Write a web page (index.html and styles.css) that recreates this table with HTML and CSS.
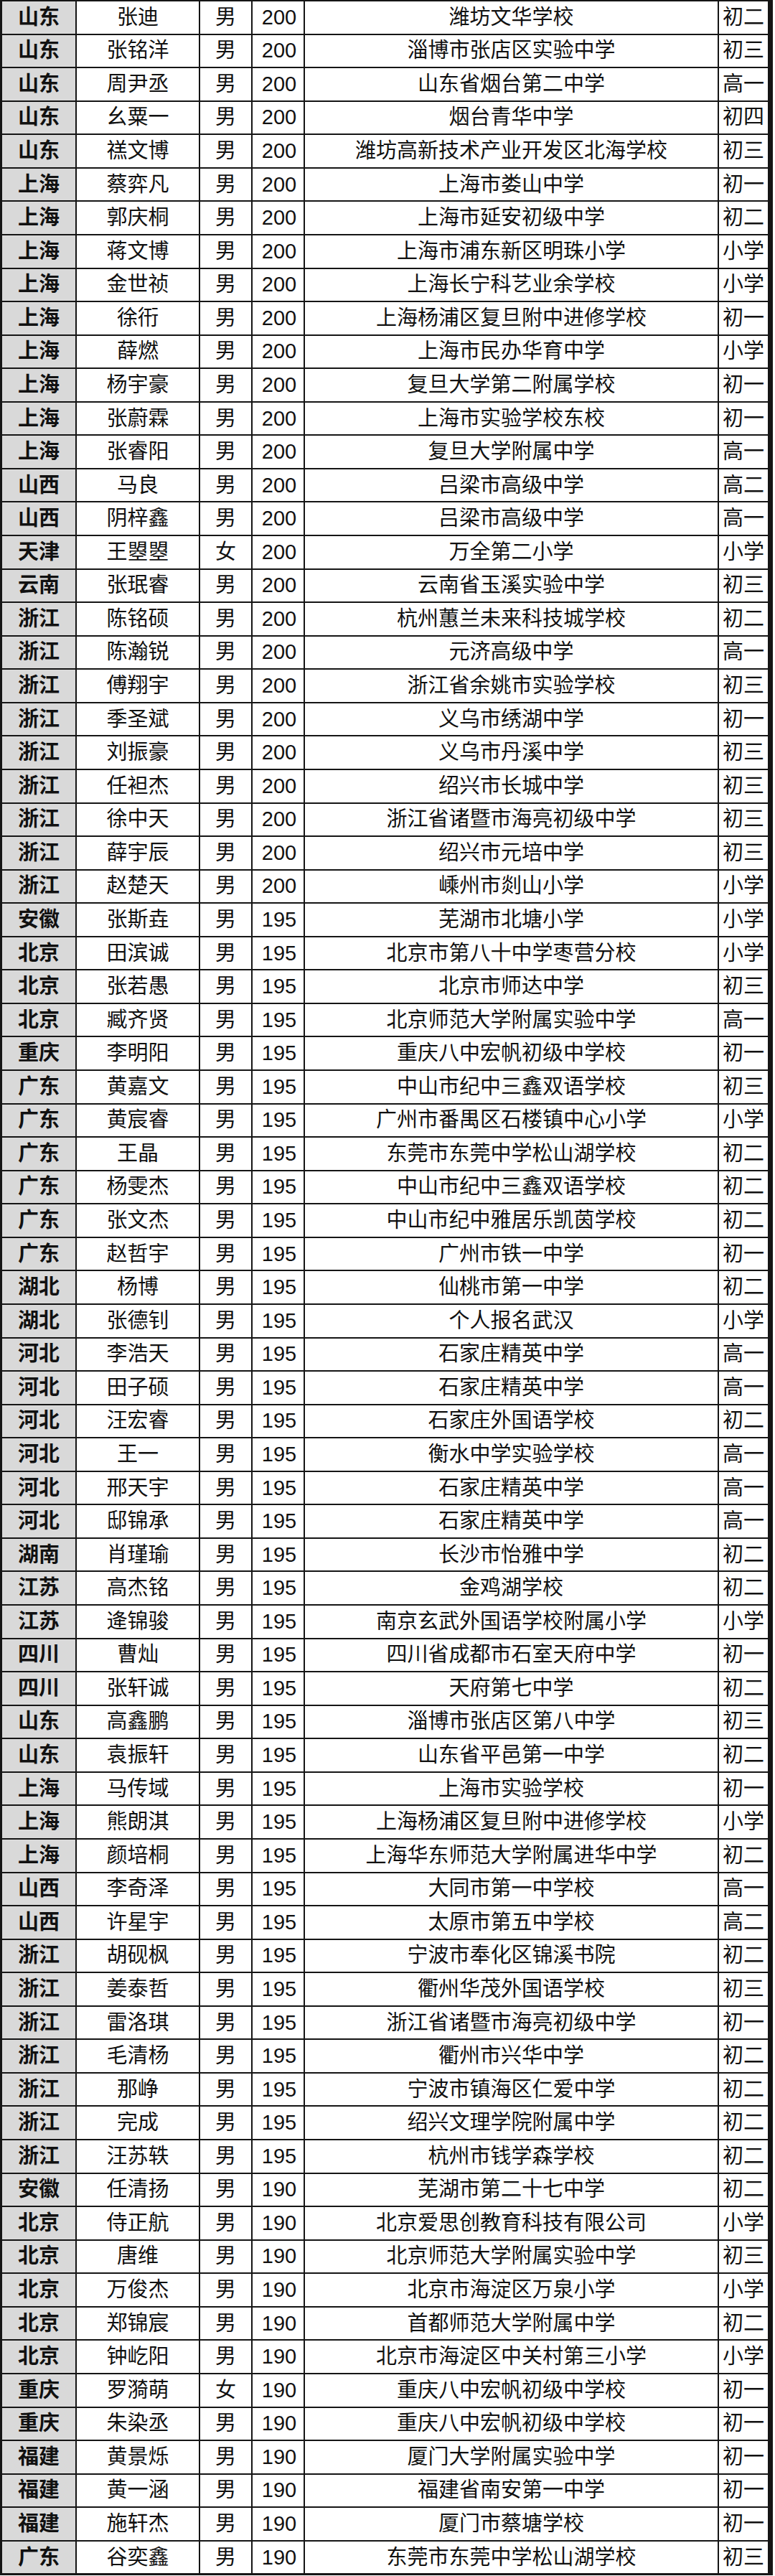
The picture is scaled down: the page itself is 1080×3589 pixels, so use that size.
FILE: index.html
```html
<!DOCTYPE html>
<html lang="zh-CN">
<head>
<meta charset="utf-8">
<title>成绩表</title>
<link rel="stylesheet" href="styles.css">
</head>
<body>
<div class="sheet">
<div class="row"><div class="c prov">山东</div><div class="c">张迪</div><div class="c">男</div><div class="c num">200</div><div class="c">潍坊文华学校</div><div class="c">初二</div></div>
<div class="row"><div class="c prov">山东</div><div class="c">张铭洋</div><div class="c">男</div><div class="c num">200</div><div class="c">淄博市张店区实验中学</div><div class="c">初三</div></div>
<div class="row"><div class="c prov">山东</div><div class="c">周尹丞</div><div class="c">男</div><div class="c num">200</div><div class="c">山东省烟台第二中学</div><div class="c">高一</div></div>
<div class="row"><div class="c prov">山东</div><div class="c">幺粟一</div><div class="c">男</div><div class="c num">200</div><div class="c">烟台青华中学</div><div class="c">初四</div></div>
<div class="row"><div class="c prov">山东</div><div class="c">禚文博</div><div class="c">男</div><div class="c num">200</div><div class="c">潍坊高新技术产业开发区北海学校</div><div class="c">初三</div></div>
<div class="row"><div class="c prov">上海</div><div class="c">蔡弈凡</div><div class="c">男</div><div class="c num">200</div><div class="c">上海市娄山中学</div><div class="c">初一</div></div>
<div class="row"><div class="c prov">上海</div><div class="c">郭庆桐</div><div class="c">男</div><div class="c num">200</div><div class="c">上海市延安初级中学</div><div class="c">初二</div></div>
<div class="row"><div class="c prov">上海</div><div class="c">蒋文博</div><div class="c">男</div><div class="c num">200</div><div class="c">上海市浦东新区明珠小学</div><div class="c">小学</div></div>
<div class="row"><div class="c prov">上海</div><div class="c">金世祯</div><div class="c">男</div><div class="c num">200</div><div class="c">上海长宁科艺业余学校</div><div class="c">小学</div></div>
<div class="row"><div class="c prov">上海</div><div class="c">徐衎</div><div class="c">男</div><div class="c num">200</div><div class="c">上海杨浦区复旦附中进修学校</div><div class="c">初一</div></div>
<div class="row"><div class="c prov">上海</div><div class="c">薛燃</div><div class="c">男</div><div class="c num">200</div><div class="c">上海市民办华育中学</div><div class="c">小学</div></div>
<div class="row"><div class="c prov">上海</div><div class="c">杨宇豪</div><div class="c">男</div><div class="c num">200</div><div class="c">复旦大学第二附属学校</div><div class="c">初一</div></div>
<div class="row"><div class="c prov">上海</div><div class="c">张蔚霖</div><div class="c">男</div><div class="c num">200</div><div class="c">上海市实验学校东校</div><div class="c">初一</div></div>
<div class="row"><div class="c prov">上海</div><div class="c">张睿阳</div><div class="c">男</div><div class="c num">200</div><div class="c">复旦大学附属中学</div><div class="c">高一</div></div>
<div class="row"><div class="c prov">山西</div><div class="c">马良</div><div class="c">男</div><div class="c num">200</div><div class="c">吕梁市高级中学</div><div class="c">高二</div></div>
<div class="row"><div class="c prov">山西</div><div class="c">阴梓鑫</div><div class="c">男</div><div class="c num">200</div><div class="c">吕梁市高级中学</div><div class="c">高一</div></div>
<div class="row"><div class="c prov">天津</div><div class="c">王曌曌</div><div class="c">女</div><div class="c num">200</div><div class="c">万全第二小学</div><div class="c">小学</div></div>
<div class="row"><div class="c prov">云南</div><div class="c">张珉睿</div><div class="c">男</div><div class="c num">200</div><div class="c">云南省玉溪实验中学</div><div class="c">初三</div></div>
<div class="row"><div class="c prov">浙江</div><div class="c">陈铭硕</div><div class="c">男</div><div class="c num">200</div><div class="c">杭州蕙兰未来科技城学校</div><div class="c">初二</div></div>
<div class="row"><div class="c prov">浙江</div><div class="c">陈瀚锐</div><div class="c">男</div><div class="c num">200</div><div class="c">元济高级中学</div><div class="c">高一</div></div>
<div class="row"><div class="c prov">浙江</div><div class="c">傅翔宇</div><div class="c">男</div><div class="c num">200</div><div class="c">浙江省余姚市实验学校</div><div class="c">初三</div></div>
<div class="row"><div class="c prov">浙江</div><div class="c">季圣斌</div><div class="c">男</div><div class="c num">200</div><div class="c">义乌市绣湖中学</div><div class="c">初一</div></div>
<div class="row"><div class="c prov">浙江</div><div class="c">刘振豪</div><div class="c">男</div><div class="c num">200</div><div class="c">义乌市丹溪中学</div><div class="c">初三</div></div>
<div class="row"><div class="c prov">浙江</div><div class="c">任袒杰</div><div class="c">男</div><div class="c num">200</div><div class="c">绍兴市长城中学</div><div class="c">初三</div></div>
<div class="row"><div class="c prov">浙江</div><div class="c">徐中天</div><div class="c">男</div><div class="c num">200</div><div class="c">浙江省诸暨市海亮初级中学</div><div class="c">初三</div></div>
<div class="row"><div class="c prov">浙江</div><div class="c">薛宇辰</div><div class="c">男</div><div class="c num">200</div><div class="c">绍兴市元培中学</div><div class="c">初三</div></div>
<div class="row"><div class="c prov">浙江</div><div class="c">赵楚天</div><div class="c">男</div><div class="c num">200</div><div class="c">嵊州市剡山小学</div><div class="c">小学</div></div>
<div class="row"><div class="c prov">安徽</div><div class="c">张斯垚</div><div class="c">男</div><div class="c num">195</div><div class="c">芜湖市北塘小学</div><div class="c">小学</div></div>
<div class="row"><div class="c prov">北京</div><div class="c">田滨诚</div><div class="c">男</div><div class="c num">195</div><div class="c">北京市第八十中学枣营分校</div><div class="c">小学</div></div>
<div class="row"><div class="c prov">北京</div><div class="c">张若愚</div><div class="c">男</div><div class="c num">195</div><div class="c">北京市师达中学</div><div class="c">初三</div></div>
<div class="row"><div class="c prov">北京</div><div class="c">臧齐贤</div><div class="c">男</div><div class="c num">195</div><div class="c">北京师范大学附属实验中学</div><div class="c">高一</div></div>
<div class="row"><div class="c prov">重庆</div><div class="c">李明阳</div><div class="c">男</div><div class="c num">195</div><div class="c">重庆八中宏帆初级中学校</div><div class="c">初一</div></div>
<div class="row"><div class="c prov">广东</div><div class="c">黄嘉文</div><div class="c">男</div><div class="c num">195</div><div class="c">中山市纪中三鑫双语学校</div><div class="c">初三</div></div>
<div class="row"><div class="c prov">广东</div><div class="c">黄宸睿</div><div class="c">男</div><div class="c num">195</div><div class="c">广州市番禺区石楼镇中心小学</div><div class="c">小学</div></div>
<div class="row"><div class="c prov">广东</div><div class="c">王晶</div><div class="c">男</div><div class="c num">195</div><div class="c">东莞市东莞中学松山湖学校</div><div class="c">初二</div></div>
<div class="row"><div class="c prov">广东</div><div class="c">杨雯杰</div><div class="c">男</div><div class="c num">195</div><div class="c">中山市纪中三鑫双语学校</div><div class="c">初二</div></div>
<div class="row"><div class="c prov">广东</div><div class="c">张文杰</div><div class="c">男</div><div class="c num">195</div><div class="c">中山市纪中雅居乐凯茵学校</div><div class="c">初二</div></div>
<div class="row"><div class="c prov">广东</div><div class="c">赵哲宇</div><div class="c">男</div><div class="c num">195</div><div class="c">广州市铁一中学</div><div class="c">初一</div></div>
<div class="row"><div class="c prov">湖北</div><div class="c">杨博</div><div class="c">男</div><div class="c num">195</div><div class="c">仙桃市第一中学</div><div class="c">初二</div></div>
<div class="row"><div class="c prov">湖北</div><div class="c">张德钊</div><div class="c">男</div><div class="c num">195</div><div class="c">个人报名武汉</div><div class="c">小学</div></div>
<div class="row"><div class="c prov">河北</div><div class="c">李浩天</div><div class="c">男</div><div class="c num">195</div><div class="c">石家庄精英中学</div><div class="c">高一</div></div>
<div class="row"><div class="c prov">河北</div><div class="c">田子硕</div><div class="c">男</div><div class="c num">195</div><div class="c">石家庄精英中学</div><div class="c">高一</div></div>
<div class="row"><div class="c prov">河北</div><div class="c">汪宏睿</div><div class="c">男</div><div class="c num">195</div><div class="c">石家庄外国语学校</div><div class="c">初二</div></div>
<div class="row"><div class="c prov">河北</div><div class="c">王一</div><div class="c">男</div><div class="c num">195</div><div class="c">衡水中学实验学校</div><div class="c">高一</div></div>
<div class="row"><div class="c prov">河北</div><div class="c">邢天宇</div><div class="c">男</div><div class="c num">195</div><div class="c">石家庄精英中学</div><div class="c">高一</div></div>
<div class="row"><div class="c prov">河北</div><div class="c">邸锦承</div><div class="c">男</div><div class="c num">195</div><div class="c">石家庄精英中学</div><div class="c">高一</div></div>
<div class="row"><div class="c prov">湖南</div><div class="c">肖瑾瑜</div><div class="c">男</div><div class="c num">195</div><div class="c">长沙市怡雅中学</div><div class="c">初二</div></div>
<div class="row"><div class="c prov">江苏</div><div class="c">高杰铭</div><div class="c">男</div><div class="c num">195</div><div class="c">金鸡湖学校</div><div class="c">初二</div></div>
<div class="row"><div class="c prov">江苏</div><div class="c">逄锦骏</div><div class="c">男</div><div class="c num">195</div><div class="c">南京玄武外国语学校附属小学</div><div class="c">小学</div></div>
<div class="row"><div class="c prov">四川</div><div class="c">曹灿</div><div class="c">男</div><div class="c num">195</div><div class="c">四川省成都市石室天府中学</div><div class="c">初一</div></div>
<div class="row"><div class="c prov">四川</div><div class="c">张轩诚</div><div class="c">男</div><div class="c num">195</div><div class="c">天府第七中学</div><div class="c">初二</div></div>
<div class="row"><div class="c prov">山东</div><div class="c">高鑫鹏</div><div class="c">男</div><div class="c num">195</div><div class="c">淄博市张店区第八中学</div><div class="c">初三</div></div>
<div class="row"><div class="c prov">山东</div><div class="c">袁振轩</div><div class="c">男</div><div class="c num">195</div><div class="c">山东省平邑第一中学</div><div class="c">初二</div></div>
<div class="row"><div class="c prov">上海</div><div class="c">马传域</div><div class="c">男</div><div class="c num">195</div><div class="c">上海市实验学校</div><div class="c">初一</div></div>
<div class="row"><div class="c prov">上海</div><div class="c">熊朗淇</div><div class="c">男</div><div class="c num">195</div><div class="c">上海杨浦区复旦附中进修学校</div><div class="c">小学</div></div>
<div class="row"><div class="c prov">上海</div><div class="c">颜培桐</div><div class="c">男</div><div class="c num">195</div><div class="c">上海华东师范大学附属进华中学</div><div class="c">初二</div></div>
<div class="row"><div class="c prov">山西</div><div class="c">李奇泽</div><div class="c">男</div><div class="c num">195</div><div class="c">大同市第一中学校</div><div class="c">高一</div></div>
<div class="row"><div class="c prov">山西</div><div class="c">许星宇</div><div class="c">男</div><div class="c num">195</div><div class="c">太原市第五中学校</div><div class="c">高二</div></div>
<div class="row"><div class="c prov">浙江</div><div class="c">胡砚枫</div><div class="c">男</div><div class="c num">195</div><div class="c">宁波市奉化区锦溪书院</div><div class="c">初二</div></div>
<div class="row"><div class="c prov">浙江</div><div class="c">姜泰哲</div><div class="c">男</div><div class="c num">195</div><div class="c">衢州华茂外国语学校</div><div class="c">初三</div></div>
<div class="row"><div class="c prov">浙江</div><div class="c">雷洛琪</div><div class="c">男</div><div class="c num">195</div><div class="c">浙江省诸暨市海亮初级中学</div><div class="c">初一</div></div>
<div class="row"><div class="c prov">浙江</div><div class="c">毛清杨</div><div class="c">男</div><div class="c num">195</div><div class="c">衢州市兴华中学</div><div class="c">初二</div></div>
<div class="row"><div class="c prov">浙江</div><div class="c">那峥</div><div class="c">男</div><div class="c num">195</div><div class="c">宁波市镇海区仁爱中学</div><div class="c">初二</div></div>
<div class="row"><div class="c prov">浙江</div><div class="c">完成</div><div class="c">男</div><div class="c num">195</div><div class="c">绍兴文理学院附属中学</div><div class="c">初二</div></div>
<div class="row"><div class="c prov">浙江</div><div class="c">汪苏轶</div><div class="c">男</div><div class="c num">195</div><div class="c">杭州市钱学森学校</div><div class="c">初二</div></div>
<div class="row"><div class="c prov">安徽</div><div class="c">任清扬</div><div class="c">男</div><div class="c num">190</div><div class="c">芜湖市第二十七中学</div><div class="c">初二</div></div>
<div class="row"><div class="c prov">北京</div><div class="c">侍正航</div><div class="c">男</div><div class="c num">190</div><div class="c">北京爱思创教育科技有限公司</div><div class="c">小学</div></div>
<div class="row"><div class="c prov">北京</div><div class="c">唐维</div><div class="c">男</div><div class="c num">190</div><div class="c">北京师范大学附属实验中学</div><div class="c">初三</div></div>
<div class="row"><div class="c prov">北京</div><div class="c">万俊杰</div><div class="c">男</div><div class="c num">190</div><div class="c">北京市海淀区万泉小学</div><div class="c">小学</div></div>
<div class="row"><div class="c prov">北京</div><div class="c">郑锦宸</div><div class="c">男</div><div class="c num">190</div><div class="c">首都师范大学附属中学</div><div class="c">初二</div></div>
<div class="row"><div class="c prov">北京</div><div class="c">钟屹阳</div><div class="c">男</div><div class="c num">190</div><div class="c">北京市海淀区中关村第三小学</div><div class="c">小学</div></div>
<div class="row"><div class="c prov">重庆</div><div class="c">罗漪萌</div><div class="c">女</div><div class="c num">190</div><div class="c">重庆八中宏帆初级中学校</div><div class="c">初一</div></div>
<div class="row"><div class="c prov">重庆</div><div class="c">朱染丞</div><div class="c">男</div><div class="c num">190</div><div class="c">重庆八中宏帆初级中学校</div><div class="c">初一</div></div>
<div class="row"><div class="c prov">福建</div><div class="c">黄景烁</div><div class="c">男</div><div class="c num">190</div><div class="c">厦门大学附属实验中学</div><div class="c">初一</div></div>
<div class="row"><div class="c prov">福建</div><div class="c">黄一涵</div><div class="c">男</div><div class="c num">190</div><div class="c">福建省南安第一中学</div><div class="c">初一</div></div>
<div class="row"><div class="c prov">福建</div><div class="c">施轩杰</div><div class="c">男</div><div class="c num">190</div><div class="c">厦门市蔡塘学校</div><div class="c">初一</div></div>
<div class="row"><div class="c prov">广东</div><div class="c">谷奕鑫</div><div class="c">男</div><div class="c num">190</div><div class="c">东莞市东莞中学松山湖学校</div><div class="c">初三</div></div>
</div>
</body>
</html>
```

FILE: styles.css
```css
html, body {
  margin: 0;
  padding: 0;
  background: #ffffff;
}

body {
  font-family: "Liberation Sans", "Noto Sans CJK SC", sans-serif;
  color: #111111;
}

.sheet {
  display: grid;
  width: max-content;
  grid-template-columns: 102px 170px 71px 71px 575px 68px;
  grid-auto-rows: 44.57px;
  column-gap: 2px;
  row-gap: 2px;
  padding: 2px 7px 3px 3px;
  background: #151515;
}

.row {
  display: contents;
}

.c {
  background: #ffffff;
  display: flex;
  align-items: center;
  justify-content: center;
  font-size: 29px;
  line-height: 1;
  white-space: nowrap;
  overflow: hidden;
}

.c.prov {
  background: #d9d9d9;
  font-weight: 700;
}

.c.num {
  padding-left: 3px;
}
```
